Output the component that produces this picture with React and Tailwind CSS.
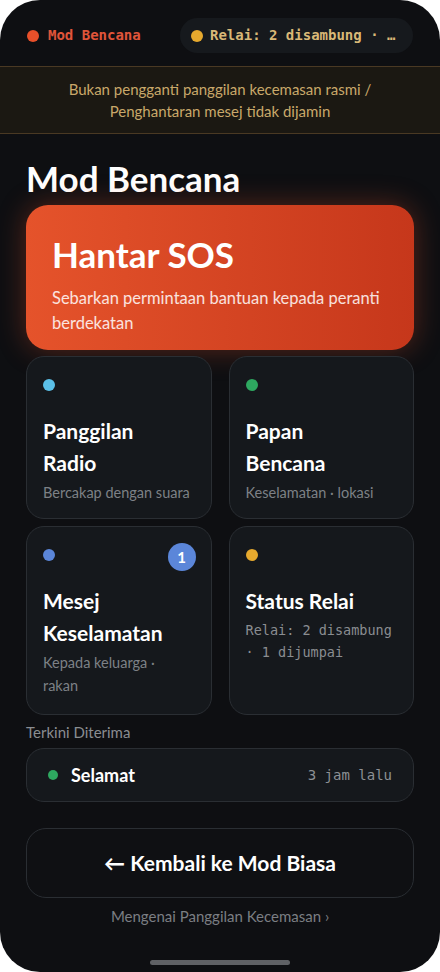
import React from 'react';

const sans = "font-['Lato','Noto_Sans',sans-serif]";
const mono = "font-['DejaVu_Sans_Mono','Liberation_Mono',monospace]";

function Tile({ dot, title, sub, subMono, badge, tall }) {
  return (
    <div
      className={`relative flex flex-col rounded-[18px] border border-[#2a2e33] bg-[#15181c] px-4 pt-[22px] ${
        tall ? 'pb-[17px]' : 'pb-[14px]'
      }`}
    >
      <span className={`block h-3 w-3 rounded-full ${dot}`} />
      {badge && (
        <span className="absolute right-[15px] top-[16px] flex h-7 w-7 items-center justify-center rounded-full bg-[#5b86d9] text-[15px] font-bold text-white">
          {badge}
        </span>
      )}
      <h3 className="mt-[24px] text-[21px] font-bold leading-[32px] text-white">{title}</h3>
      {subMono ? (
        <p className={`${mono} mt-[2px] text-[13.5px] leading-[22px] text-[#8a8d91]`}>{sub}</p>
      ) : (
        <p className="mt-[2px] text-[14.5px] leading-[23px] text-[#7d8186]">{sub}</p>
      )}
    </div>
  );
}

export default function App() {
  return (
    <div className={`min-h-screen bg-white ${sans}`}>
      <div className="relative flex h-[972px] w-[440px] flex-col overflow-hidden rounded-[40px] bg-[#0e0f12]">
        {/* Status row */}
        <header className="flex items-center justify-between pl-[27px] pr-[27px] pt-[18px]">
          <div className="flex items-center gap-[9px]">
            <span className="h-3 w-3 rounded-full bg-[#e8502a]" />
            <span className={`${mono} text-[14px] font-bold text-[#e0553a]`}>Mod Bencana</span>
          </div>
          <div className="flex h-[35px] w-[233px] items-center gap-[7px] rounded-full bg-[#16191d] pl-[11px]">
            <span className="h-3 w-3 shrink-0 rounded-full bg-[#e6a92e]" />
            <span className={`${mono} whitespace-nowrap text-[14px] font-bold text-[#d9b877]`}>
              Relai: 2 disambung · …
            </span>
          </div>
        </header>

        {/* Disclaimer */}
        <div className="mt-[13px] border-y border-[#4a3923] bg-[#1b1812] py-[11px] text-center text-[15px] leading-[22px] text-[#c9a86a]">
          Bukan pengganti panggilan kecemasan rasmi /<br />
          Penghantaran mesej tidak dijamin
        </div>

        <main className="flex flex-1 flex-col px-[26px]">
          <h1 className="mt-[24px] text-[35px] font-bold leading-[40px] text-white">Mod Bencana</h1>

          <button className="mt-[7px] h-[145px] rounded-[22px] bg-gradient-to-r from-[#e5532b] to-[#c6371b] px-[26px] pt-[13px] text-left shadow-[0_0_28px_rgba(230,80,40,0.35)]">
            <div className="text-[35px] font-bold leading-[44px] text-white">Hantar SOS</div>
            <div className="mt-[10px] text-[16.5px] leading-[25px] text-white/85">
              Sebarkan permintaan bantuan kepada peranti berdekatan
            </div>
          </button>

          <div className="mt-[6px] grid grid-cols-2 gap-x-[17px] gap-y-[7px]">
            <Tile dot="bg-[#5bc0e8]" title={<>Panggilan<br />Radio</>} sub="Bercakap dengan suara" />
            <Tile dot="bg-[#2ea860]" title={<>Papan<br />Bencana</>} sub="Keselamatan · lokasi" />
            <Tile
              dot="bg-[#5b86d9]"
              badge="1"
              tall
              title={<>Mesej<br />Keselamatan</>}
              sub={<>Kepada keluarga ·<br />rakan</>}
            />
            <Tile dot="bg-[#e6a92e]" title="Status Relai" sub="Relai: 2 disambung · 1 dijumpai" subMono />
          </div>

          <p className="mt-[7px] text-[15px] leading-[20px] text-[#8a8d91]">Terkini Diterima</p>

          <div className="mt-[6px] flex h-[54px] items-center rounded-[18px] border border-[#2a2e33] bg-[#15181c] pl-[21px] pr-[21px]">
            <span className="h-[10px] w-[10px] rounded-full bg-[#2ea860]" />
            <span className="ml-[13px] text-[18px] font-bold text-white">Selamat</span>
            <span className={`${mono} ml-auto text-[14px] text-[#8d9094]`}>3 jam lalu</span>
          </div>

          <button className="mt-[26px] flex h-[70px] items-center justify-center rounded-[20px] border border-[#2a2e33] bg-[#0f1013] text-[21px] font-bold text-white">
            ← Kembali ke Mod Biasa
          </button>

          <p className="mt-[7px] text-center text-[15px] leading-[22px] text-[#7b7e83]">
            Mengenai Panggilan Kecemasan ›
          </p>
        </main>

        <div className="mx-auto mb-[7px] h-[5px] w-[140px] rounded-full bg-[#5f6165]" />
      </div>
    </div>
  );
}
